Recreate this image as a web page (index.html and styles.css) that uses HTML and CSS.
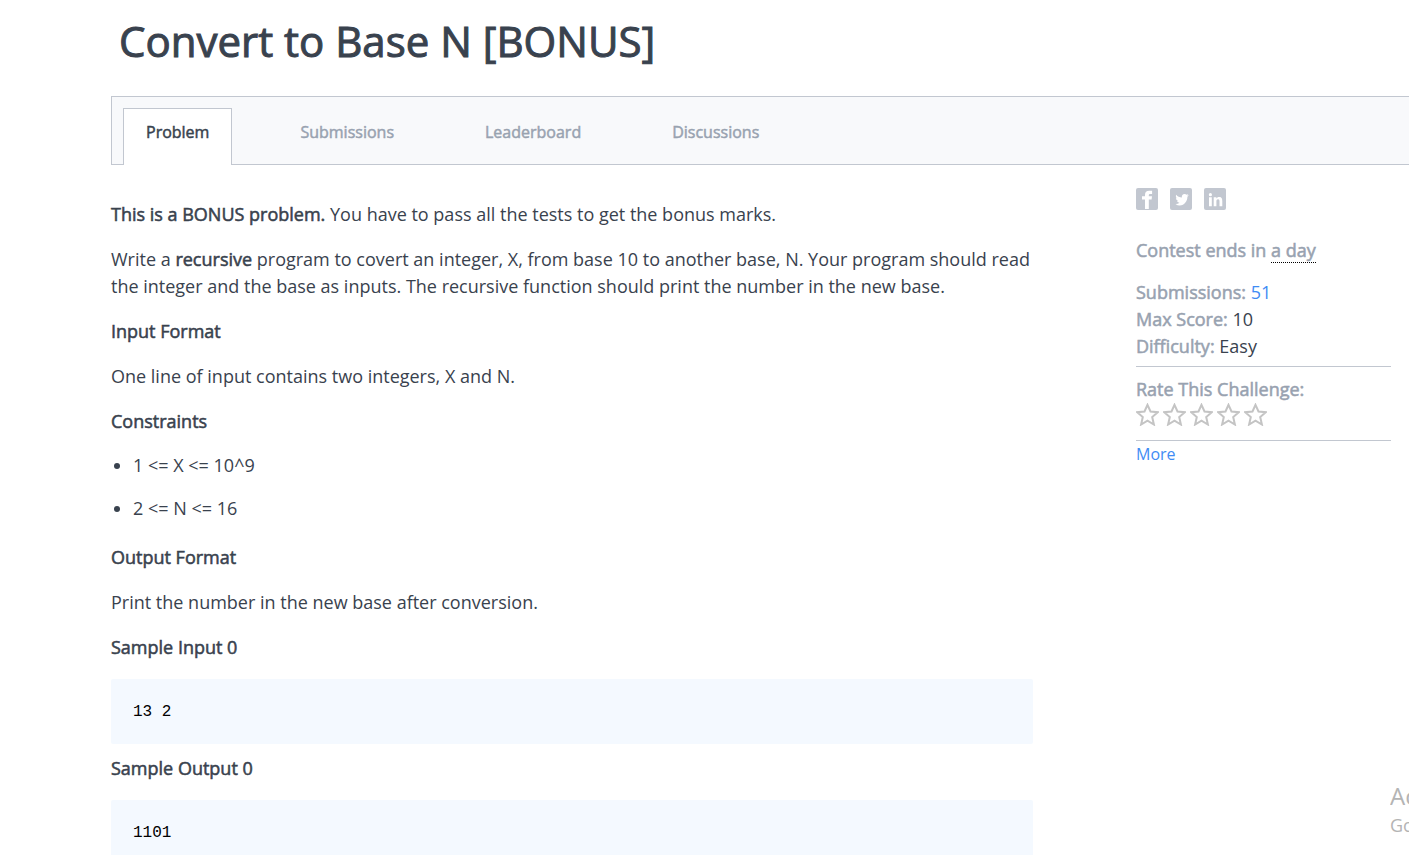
FILE: index.html
```
<!DOCTYPE html>
<html lang="en">
<head>
<meta charset="utf-8">
<meta name="viewport" content="width=device-width, initial-scale=1">
<title>Convert to Base N [BONUS]</title>
<link rel="stylesheet" href="styles.css">
</head>
<body>
<div class="page">
  <h1 class="title">Convert to Base N [BONUS]</h1>
  <nav class="tabs">
    <a class="tab tab-active" href="#problem">Problem</a>
    <a class="tab" href="#submissions">Submissions</a>
    <a class="tab" href="#leaderboard">Leaderboard</a>
    <a class="tab" href="#discussions">Discussions</a>
  </nav>
  <div class="columns">
    <main class="statement" id="problem">
      <p><strong>This is a BONUS problem.</strong> You have to pass all the tests to get the bonus marks.</p>
      <p>Write a <strong>recursive</strong> program to covert an integer, X, from base 10 to another base, N. Your program should read the integer and the base as inputs. The recursive function should print the number in the new base.</p>
      <h2>Input Format</h2>
      <p>One line of input contains two integers, X and N.</p>
      <h2>Constraints</h2>
      <ul>
        <li>1 &lt;= X &lt;= 10^9</li>
        <li>2 &lt;= N &lt;= 16</li>
      </ul>
      <h2>Output Format</h2>
      <p>Print the number in the new base after conversion.</p>
      <h2>Sample Input 0</h2>
      <pre>13 2</pre>
      <h2>Sample Output 0</h2>
      <pre>1101</pre>
    </main>
    <aside class="side">
      <div class="social">
        <a href="#facebook" aria-label="Facebook"><svg viewBox="0 0 22 22"><path d="M9 21V11.500H6V8.300h3V7c0-3 1.400-4.200 4.200-4.200h2.900V6h-1.700c-1.200 0-1.600.4-1.600 1.500v.8h3.200l-.4 3.200h-2.800V21z"/></svg></a>
        <a href="#twitter" aria-label="Twitter"><svg viewBox="0 0 22 22"><path d="M5.500 15.900c1.500.1 2.900-.3 4-1.200-1.200 0-2.200-.8-2.600-1.900.4.100.8.100 1.200 0-1.300-.3-2.200-1.400-2.200-2.700.4.200.8.300 1.200.3-1.200-.8-1.600-2.400-.9-3.700 1.400 1.700 3.400 2.700 5.700 2.800-.5-2 .9-3.600 2.700-3.600.8 0 1.500.3 2 .9l1.700-.7-1.100 1.500 1.600-.4-1.400 1.500c.1 4-2.800 8.700-7.700 8.700-1.500 0-2.900-.5-4.200-1.500z"/></svg></a>
        <a href="#linkedin" aria-label="LinkedIn"><svg viewBox="0 0 22 22"><path d="M5 9.300h2.800v8.900H5zM6.400 5.100a1.600 1.600 0 1 1 0 3.200 1.600 1.600 0 0 1 0-3.200zM9.700 9.300h2.700v1.200c.5-.9 1.400-1.500 2.700-1.500 2.700 0 3.200 1.800 3.200 4.200v5h-2.800v-4.500c0-1.200-.1-2.400-1.500-2.400s-1.600 1.200-1.600 2.400v4.500H9.700z"/></svg></a>
      </div>
      <p class="ends">Contest ends in <span class="time">a day</span></p>
      <div class="facts">
        <div><b>Submissions:</b> <a href="#submissions">51</a></div>
        <div><b>Max Score:</b> 10</div>
        <div><b>Difficulty:</b> Easy</div>
      </div>
      <div class="rate">
        <b>Rate This Challenge:</b>
        <div class="stars">
          <button type="button" aria-label="1 star"><svg viewBox="0 0 23 23"><path d="M11.500 1.800l3 6.700 7.200.7-5.500 4.800 1.700 7.500-6.400-3.900-6.400 3.900 1.700-7.500L1.300 9.200l7.200-.7z"/></svg></button>
          <button type="button" aria-label="2 stars"><svg viewBox="0 0 23 23"><path d="M11.500 1.800l3 6.700 7.200.7-5.500 4.800 1.700 7.500-6.400-3.900-6.400 3.900 1.700-7.500L1.300 9.200l7.200-.7z"/></svg></button>
          <button type="button" aria-label="3 stars"><svg viewBox="0 0 23 23"><path d="M11.500 1.800l3 6.700 7.200.7-5.500 4.800 1.700 7.500-6.400-3.900-6.400 3.900 1.700-7.500L1.300 9.200l7.200-.7z"/></svg></button>
          <button type="button" aria-label="4 stars"><svg viewBox="0 0 23 23"><path d="M11.500 1.800l3 6.700 7.200.7-5.500 4.800 1.700 7.500-6.400-3.900-6.400 3.900 1.700-7.500L1.300 9.200l7.200-.7z"/></svg></button>
          <button type="button" aria-label="5 stars"><svg viewBox="0 0 23 23"><path d="M11.500 1.800l3 6.700 7.200.7-5.500 4.800 1.700 7.500-6.400-3.900-6.400 3.900 1.700-7.500L1.300 9.200l7.200-.7z"/></svg></button>
        </div>
      </div>
      <a class="more" href="#more">More</a>
    </aside>
  </div>
</div>
<div class="notice"><div class="notice-title">Ac</div><div>Go</div></div>
</body>
</html>
```
FILE: styles.css
```
* { box-sizing: border-box; }
html { overflow: hidden; }
body {
  margin: 0;
  min-height: 100vh;
  background: #fff;
  color: #39424e;
  font: 400 18px/27px "Open Sans", sans-serif;
}
a { color: #3f8cf4; text-decoration: none; }
strong, b, h2, .title, .tab, .ends {
  font-weight: 400;
  -webkit-text-stroke: 0.03em currentColor;
}
.page { padding-left: 111px; }
.title {
  margin: 0;
  padding: 11px 8px 25px;
  font-size: 42px;
  line-height: 60px;
  -webkit-text-stroke-width: 1px;
}
.tabs {
  display: flex;
  gap: 45px;
  padding: 11px 11px 0;
  background: #f8f9fb;
  border: 1px solid #c2c7d0;
  border-right: 0;
}
.tab {
  padding: 10px 22px 18px;
  border: 1px solid transparent;
  border-bottom: 0;
  font-size: 16px;
  color: #98a2b0;
}
.tab-active {
  margin-bottom: -1px;
  background: #fff;
  border-color: #c2c7d0;
  color: #39424e;
}
.columns {
  display: flex;
  justify-content: space-between;
  padding-right: 18px;
}
.statement { flex: 0 1 922px; padding-top: 36px; }
.statement p, .statement h2 { margin: 0 0 18px; font-size: 18px; line-height: 27px; }
.statement ul { margin: -1px 0 22px; padding-left: 22px; }
.statement li + li { margin-top: 16px; }
.statement pre {
  margin: 0 0 11px;
  padding: 23px 22px 21px;
  background: #f4f9ff;
  border-radius: 2px;
  color: #000;
  font: 400 16px/21px "Liberation Mono", monospace;
}
.side { flex: 0 0 255px; padding-top: 23px; }
.social { display: flex; gap: 12px; margin-bottom: 27px; }
.social a { width: 22px; height: 22px; background: #c2c7d0; border-radius: 2px; }
.social svg { display: block; fill: #fff; }
.ends { margin: 0 0 15px; color: #98a2b0; }
.time { border-bottom: 1px dotted #000; }
.side b { color: #98a2b0; }
.facts { padding-bottom: 6px; border-bottom: 1px solid #c2c7d0; }
.rate { padding: 9px 0 14px; border-bottom: 1px solid #c2c7d0; }
.stars { display: flex; gap: 4px; }
.stars button { width: 23px; height: 23px; padding: 0; border: 0; background: none; }
.stars svg { display: block; fill: none; stroke: #c4c4c4; stroke-width: 2; }
.more { display: block; font-size: 16px; line-height: 26px; }
.notice {
  position: absolute;
  right: 0;
  bottom: 16px;
  width: 19px;
  overflow: hidden;
  color: #b4b4b4;
  font-size: 18px;
}
.notice-title { font-size: 24px; line-height: 33px; }
```
